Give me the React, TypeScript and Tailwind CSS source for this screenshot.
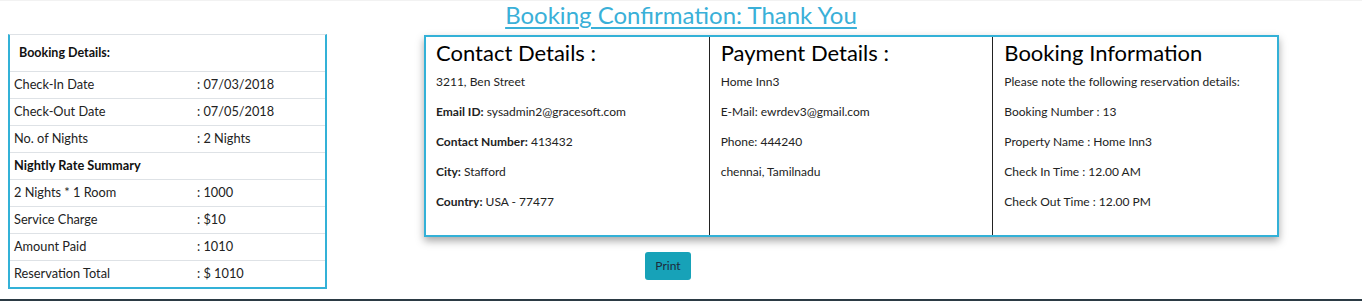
import React from "react";

const bookingRows = [
  { label: "Check-In Date", value: ": 07/03/2018" },
  { label: "Check-Out Date", value: ": 07/05/2018" },
  { label: "No. of Nights", value: ": 2 Nights" },
];

const rateRows = [
  { label: "2 Nights * 1 Room", value: ": 1000" },
  { label: "Service Charge", value: ": $10" },
  { label: "Amount Paid", value: ": 1010" },
  { label: "Reservation Total", value: ": $ 1010" },
];

const Row = ({ label, value }: { label: string; value: string }) => (
  <div className="flex h-[27px] items-center border-t border-[#dee2e6] px-[4px] text-[12.75px] text-[#222]">
    <span className="w-[183px]">{label}</span>
    <span>{value}</span>
  </div>
);

const App = () => {
  return (
    <div className="flex h-[301px] flex-col border-t border-[#f2f2f2] bg-white font-['Lato',sans-serif]">
      <div className="flex h-[33px] justify-center">
        <a href="#" className="text-[24px] leading-[27px] text-[#3ab0d8] underline underline-offset-[3px] decoration-[1.5px]">
          Booking Confirmation: Thank You
        </a>
      </div>

      <div className="flex items-start">
        <div className="ml-[8px] w-[319px] border-x-2 border-b-2 border-x-[#33b1d7] border-b-[#33b1d7] border-t border-t-[#dee2e6]">
          <div className="flex h-[36px] items-center pl-[9px] text-[12.5px] font-bold text-[#111]">Booking Details:</div>
          {bookingRows.map((r) => (
            <Row key={r.label} {...r} />
          ))}
          <div className="flex h-[27px] items-center border-t border-[#dee2e6] px-[4px] text-[12.75px] font-bold text-[#111]">
            Nightly Rate Summary
          </div>
          {rateRows.map((r) => (
            <Row key={r.label} {...r} />
          ))}
        </div>

        <div className="ml-[97px] flex flex-col">
          <div className="mt-[1px] grid w-[855px] grid-cols-3 border-2 border-[#33b1d7] shadow-[0_4px_8px_rgba(0,0,0,0.35)]">
            <div className="h-[198px] border-r border-[#222] px-[10px] pt-[1px]">
              <h2 className="text-[22px] leading-[30px] text-black">Contact Details :</h2>
              <div className="text-[12px] leading-[30px] text-[#222]">
                <p className="-mt-[1px]">3211, Ben Street</p>
                <p><b>Email ID:</b> sysadmin2@gracesoft.com</p>
                <p><b>Contact Number:</b> 413432</p>
                <p><b>City:</b> Stafford</p>
                <p><b>Country:</b> USA - 77477</p>
              </div>
            </div>
            <div className="border-r border-[#222] px-[11px] pt-[1px]">
              <h2 className="text-[22px] leading-[30px] text-black">Payment Details :</h2>
              <div className="text-[12px] leading-[30px] text-[#222]">
                <p className="-mt-[1px]">Home Inn3</p>
                <p>E-Mail: ewrdev3@gmail.com</p>
                <p>Phone: 444240</p>
                <p>chennai, Tamilnadu</p>
              </div>
            </div>
            <div className="px-[11px] pt-[1px]">
              <h2 className="text-[22px] leading-[30px] text-black">Booking Information</h2>
              <div className="text-[12px] leading-[30px] text-[#222]">
                <p className="-mt-[1px]">Please note the following reservation details:</p>
                <p>Booking Number : 13</p>
                <p>Property Name : Home Inn3</p>
                <p>Check In Time : 12.00 AM</p>
                <p>Check Out Time : 12.00 PM</p>
              </div>
            </div>
          </div>
          <div className="ml-[221px] mt-[15px]">
            <button className="h-[28px] w-[46px] rounded-[3px] bg-[#17a2b8] text-[12px] text-[#1e2a3a]">Print</button>
          </div>
        </div>
      </div>

      <div className="mt-auto h-[2px] bg-[#2b3a44]" />
    </div>
  );
};

export default App;
